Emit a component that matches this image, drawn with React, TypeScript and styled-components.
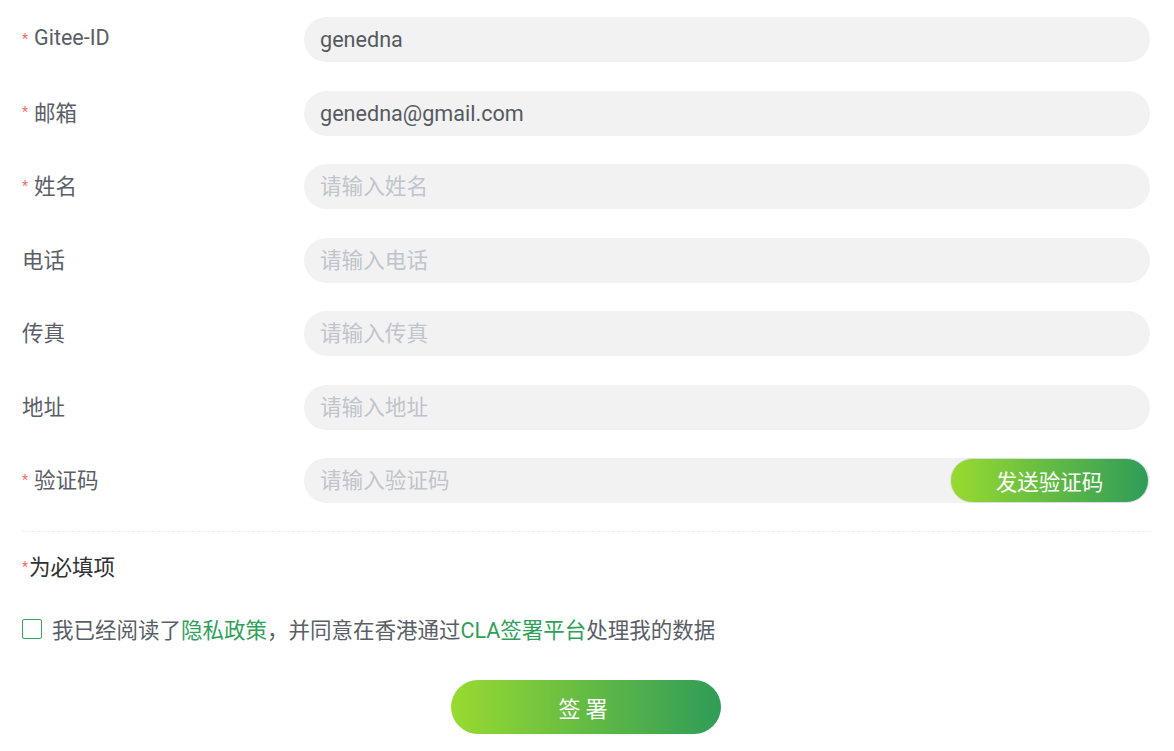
import React, { useState } from "react";
import styled, { createGlobalStyle } from "styled-components";

const Global = createGlobalStyle`
  html, body { margin: 0; padding: 0; background: #fff; }
  body { font-family: Roboto, "Noto Sans CJK SC", "Liberation Sans", sans-serif; }
  * { box-sizing: border-box; }
`;

const Page = styled.div`
  width: 1174px;
  padding: 17px 24px 0 22px;
`;

const Form = styled.div`
  display: flex;
  flex-direction: column;
  gap: 28.5px;
`;

const Row = styled.div`
  display: grid;
  grid-template-columns: 282px 1fr;
  align-items: center;
  height: 45px;
`;

const Label = styled.label`
  display: flex;
  align-items: center;
  font-size: 21.5px;
  color: #5a5e66;
  margin-top: -4px;
`;

const Star = styled.span`
  color: #f56c6c;
  font-size: 14px;
  margin-right: 6px;
  position: relative;
  top: 1px;
`;

const Field = styled.div`
  display: flex;
  align-items: center;
  height: 45px;
  background: #f2f2f2;
  border-radius: 23px;
  overflow: hidden;
`;

const Input = styled.input`
  flex: 1;
  min-width: 0;
  height: 100%;
  border: none;
  outline: none;
  background: transparent;
  padding: 0 16px;
  font-family: Roboto, "Noto Sans CJK SC", sans-serif;
  font-size: 21.6px;
  color: #555a60;
  &::placeholder { color: #c0c4cc; }
`;

const CodeButton = styled.button`
  width: 199px;
  height: 45px;
  margin-right: 1px;
  border: 1px solid #d8dde6;
  border-radius: 23px;
  background: linear-gradient(90deg, #98da2f 0%, #2f9c58 100%);
  color: #fff;
  font-family: "Noto Sans CJK SC", sans-serif;
  font-size: 21.5px;
  cursor: pointer;
`;

const Divider = styled.div`
  margin-top: 28px;
  border-top: 1px dashed #ececec;
`;

const Required = styled.div`
  margin-top: 18px;
  font-size: 21.5px;
  color: #303133;
  display: flex;
  align-items: center;
`;

const ReqStar = styled.span`
  color: #f56c6c;
  font-size: 14px;
  margin-right: 1px;
  position: relative;
  top: 1px;
`;

const AgreeRow = styled.label`
  margin-top: 32px;
  display: flex;
  align-items: center;
  font-size: 21.5px;
  color: #5a5e66;
`;

const Box = styled.span<{ $checked: boolean }>`
  width: 20px;
  height: 20px;
  border: 1px solid #3aa655;
  border-radius: 2px;
  margin-right: 10px;
  background: ${(p) => (p.$checked ? "#3aa655" : "#fff")};
  flex: none;
`;

const Link = styled.a`
  color: #2fa05a;
  text-decoration: none;
`;

const Actions = styled.div`
  display: flex;
  justify-content: center;
  margin-top: 36px;
`;

const SignButton = styled.button`
  width: 270px;
  height: 54px;
  border: none;
  border-radius: 27px;
  background: linear-gradient(90deg, #98da2f 0%, #2f9c58 100%);
  color: #fff;
  font-family: "Noto Sans CJK SC", sans-serif;
  font-size: 22px;
  letter-spacing: 5px;
  padding-left: 5px;
  cursor: pointer;
`;

type FieldDef = { label: string; required: boolean; value?: string; placeholder?: string; code?: boolean };

const fields: FieldDef[] = [
  { label: "Gitee-ID", required: true, value: "genedna" },
  { label: "邮箱", required: true, value: "genedna@gmail.com" },
  { label: "姓名", required: true, placeholder: "请输入姓名" },
  { label: "电话", required: false, placeholder: "请输入电话" },
  { label: "传真", required: false, placeholder: "请输入传真" },
  { label: "地址", required: false, placeholder: "请输入地址" },
  { label: "验证码", required: true, placeholder: "请输入验证码", code: true },
];

export default function App() {
  const [checked, setChecked] = useState(false);
  return (
    <Page>
      <Global />
      <Form>
        {fields.map((f) => (
          <Row key={f.label}>
            <Label>
              {f.required && <Star>*</Star>}
              {f.label}
            </Label>
            <Field>
              <Input defaultValue={f.value} placeholder={f.placeholder} />
              {f.code && <CodeButton>发送验证码</CodeButton>}
            </Field>
          </Row>
        ))}
      </Form>
      <Divider />
      <Required>
        <ReqStar>*</ReqStar>为必填项
      </Required>
      <AgreeRow onClick={() => setChecked(!checked)}>
        <Box $checked={checked} />
        我已经阅读了<Link>隐私政策</Link>，并同意在香港通过<Link>CLA签署平台</Link>处理我的数据
      </AgreeRow>
      <Actions>
        <SignButton>签署</SignButton>
      </Actions>
    </Page>
  );
}
